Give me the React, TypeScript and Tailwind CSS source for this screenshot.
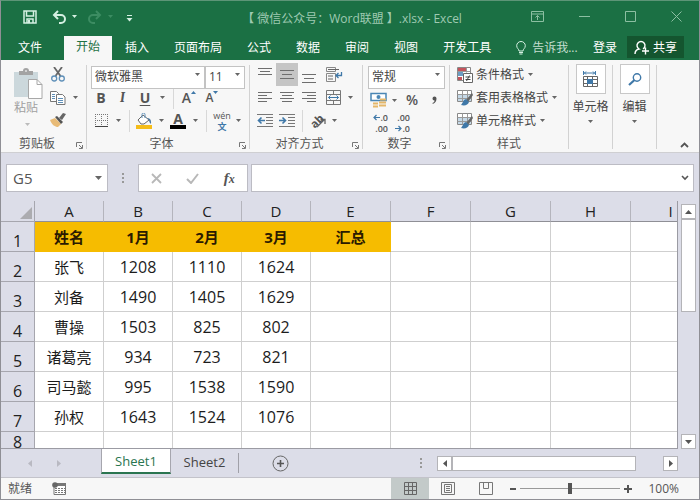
import type { ReactNode } from 'react';

const columns = [
  { name: 'A', width: 'w-[69px]' },
  { name: 'B', width: 'w-[69px]' },
  { name: 'C', width: 'w-[69px]' },
  { name: 'D', width: 'w-[69px]' },
  { name: 'E', width: 'w-[80px]' },
  { name: 'F', width: 'w-[80px]' },
  { name: 'G', width: 'w-[80px]' },
  { name: 'H', width: 'w-[80px]' },
  { name: 'I', width: 'w-[80px]' },
];

const rows: string[][] = [
  ['姓名', '1月', '2月', '3月', '汇总'],
  ['张飞', '1208', '1110', '1624'],
  ['刘备', '1490', '1405', '1629'],
  ['曹操', '1503', '825', '802'],
  ['诸葛亮', '934', '723', '821'],
  ['司马懿', '995', '1538', '1590'],
  ['孙权', '1643', '1524', '1076'],
  [],
];

const menuTabs = ['插入', '页面布局', '公式', '数据', '审阅', '视图', '开发工具'];

function Svg({ w, h, children }: { w: number; h: number; children: ReactNode }) {
  return (
    <svg width={w} height={h} viewBox={`0 0 ${w} ${h}`} fill="none" className="shrink-0" aria-hidden="true">
      {children}
    </svg>
  );
}

function Caret({ color = '#666' }: { color?: string }) {
  return (
    <Svg w={5} h={3}>
      <path d="M0 0h5L2.5 3z" fill={color} />
    </Svg>
  );
}

function Tool({ label, width, className = '', children }: { label: string; width: string; className?: string; children: ReactNode }) {
  return (
    <button aria-label={label} className={`flex h-[23px] shrink-0 items-center justify-center ${width} ${className}`}>
      {children}
    </button>
  );
}

function Separator() {
  return (
    <span className="flex w-2 shrink-0 justify-center">
      <span className="h-[22px] w-px bg-[#d8d8d8]" />
    </span>
  );
}

function Group({ label, width, launcher = false, children }: { label?: string; width: string; launcher?: boolean; children: ReactNode }) {
  return (
    <section className={`flex shrink-0 flex-col ${width}`}>
      <div className="flex flex-1">
        <div className="flex min-w-0 flex-1 flex-col">
          <div className="h-[69px]">{children}</div>
          {label && (
            <div className="flex h-6 items-center">
              <h2 className="flex-1 text-center text-[12px] leading-4 text-[#555]">{label}</h2>
              {launcher && (
                <button aria-label={`${label}设置`} className="flex w-[13px] justify-center pt-[3px]">
                  <Svg w={7} h={7}>
                    <path d="M.5 5V.5H6M3 3l3 3M6.5 3v3.5H3" stroke="#777" />
                  </Svg>
                </button>
              )}
            </div>
          )}
        </div>
        <span className="my-[2px] h-[84px] w-px bg-[#d2d2d2]" />
      </div>
    </section>
  );
}

function Dropdown({ label, value, className }: { label: string; value: string; className: string }) {
  return (
    <div className={`relative ${className}`}>
      <select
        aria-label={label}
        className="h-[23px] w-full appearance-none border border-[#c3c3c3] bg-white pl-[3px] text-[12px] leading-4 text-[#444] outline-none"
      >
        <option>{value}</option>
      </select>
      <span className="pointer-events-none absolute top-[10px] right-[5px] flex">
        <Caret />
      </span>
    </div>
  );
}

function Lines({ rows: lines }: { rows: [number, number, number][] }) {
  return (
    <Svg w={16} h={15}>
      {lines.map(([x, y, w]) => (
        <path key={y} d={`M${x} ${y}.5h${w}`} stroke="#6e6e6e" />
      ))}
    </Svg>
  );
}

function TitleBar() {
  return (
    <header className="flex h-[35px] items-center pr-[17px] pl-[22px] text-[#9fcab2]">
      <button aria-label="保存" className="mt-[-4px]">
        <Svg w={14} h={14}>
          <path d="M1 1h12v12H1zM3.5 1v5h7V1M4 13V9h6v4" stroke="#d5f0e2" strokeWidth="1.5" />
          <path d="M5 10h2v3H5z" fill="#d5f0e2" />
        </Svg>
      </button>
      <button aria-label="撤消" className="mt-[-4px] ml-[15px] flex items-center gap-[5px]">
        <Svg w={15} h={14}>
          <path d="M2 5h7a4 4 0 0 1 0 8H7M6 1L2 5l4 4" stroke="#d5f0e2" strokeWidth="2" />
        </Svg>
        <Caret color="#d5f0e2" />
      </button>
      <button aria-label="恢复" className="mt-[-4px] ml-[10px] flex items-center gap-[6px]">
        <Svg w={15} h={14}>
          <path d="M13 5H6a4 4 0 0 0 0 8h2M9 1l4 4-4 4" stroke="#3c8c62" strokeWidth="2" />
        </Svg>
        <Caret color="#3c8c62" />
      </button>
      <button aria-label="自定义快速访问工具栏" className="ml-[13px]">
        <Svg w={7} h={7}>
          <path d="M1 .5h5" stroke="#d5f0e2" />
          <path d="M.5 3h6l-3 3.5z" fill="#d5f0e2" />
        </Svg>
      </button>
      <h1 className="flex-1 pl-[40px] text-center text-[12px] leading-4 whitespace-nowrap">【 微信公众号：Word联盟 】.xlsx - Excel</h1>
      <div className="mt-[-4px] flex items-center gap-[35px]">
        <button aria-label="功能区显示选项">
          <Svg w={13} h={11}>
            <path d="M.5.5h12v10H.5zM.5 3h12M6.5 9V4.500M4.500 6.500l2-2 2 2" stroke="#8cbfa2" />
          </Svg>
        </button>
        <button aria-label="最小化">
          <Svg w={11} h={11}>
            <path d="M0 5.500h11" stroke="#8cbfa2" />
          </Svg>
        </button>
        <button aria-label="最大化">
          <Svg w={11} h={11}>
            <path d="M.5.5h10v10H.5z" stroke="#8cbfa2" />
          </Svg>
        </button>
        <button aria-label="关闭">
          <Svg w={11} h={11}>
            <path d="M.5.5l10 10M10.500.5l-10 10" stroke="#8cbfa2" />
          </Svg>
        </button>
      </div>
    </header>
  );
}

function MenuTabs() {
  return (
    <nav className="flex h-6 items-center gap-px pr-[15px] pl-[5px] text-[12px] leading-4 whitespace-nowrap text-white">
      <button className="mr-[9px] px-3">文件</button>
      <button className="h-full bg-[#f7f7f7] px-3 pb-[2px] text-[#1e7145]">开始</button>
      {menuTabs.map((tab) => (
        <button key={tab} className="px-3">
          {tab}
        </button>
      ))}
      <button className="ml-3 flex items-center gap-[6px] text-[#c4dfd0]">
        <Svg w={10} h={14}>
          <path d="M3 10C3 8 .7 7.500.7 4.700a4.300 4.200 0 0 1 8.600 0C9.300 7.500 7 8 7 10zM3 11.500h4M3.500 13h3" stroke="#d5f0e2" />
        </Svg>
        告诉我...
      </button>
      <span className="flex-1" />
      <button>登录</button>
      <button className="ml-[9px] flex h-[22px] items-center gap-[4px] self-start bg-[#14552f] px-[7px] pt-px">
        <Svg w={15} h={15}>
          <path d="M1 14c0-3 1.500-4.500 4-5a4 4 0 1 1 4 0M11.500 7.500v7M8 11h7" stroke="#fff" strokeWidth="1.4" />
        </Svg>
        共享
      </button>
    </nav>
  );
}

function ClipboardGroup() {
  return (
    <Group label="剪贴板" width="w-[86px]" launcher>
      <div className="flex h-full">
        <button className="ml-[13px] flex w-[30px] flex-col items-start justify-start gap-px pt-[5px] text-[12px] leading-4 text-[#a0a0a0]">
          <Svg w={29} h={31}>
            <path d="M0 4h24v25H0z" fill="#ccd8dc" />
            <path d="M5 7V3h4a3 3 0 0 1 6 0h4v4z" fill="#a3a3a3" />
            <path d="M11 3h2" stroke="#fff" />
            <path d="M14.500 11.500h8.500l5 5v14H14.500z" fill="#fff" stroke="#a8a8a8" />
            <path d="M23 11.500v5h5" stroke="#a8a8a8" />
          </Svg>
          粘贴
          <span className="ml-[11px] flex pt-[6px]">
            <Caret color="#bbb" />
          </span>
        </button>
        <div className="ml-[4px] flex flex-col">
          <Tool label="剪切" width="w-[20px]">
            <Svg w={14} h={15}>
              <path d="M3 0l6.500 9M11 0L4.500 9" stroke="#666" strokeWidth="1.8" />
              <circle cx="3.200" cy="11.500" r="2.500" stroke="#5e8fb8" strokeWidth="1.300" />
              <circle cx="10.800" cy="11.500" r="2.500" stroke="#5e8fb8" strokeWidth="1.300" />
            </Svg>
          </Tool>
          <div className="flex">
            <Tool label="复制" width="w-[20px]">
              <Svg w={16} h={14}>
                <path d="M.5.5h6l2 2v8h-8z" fill="#fff" stroke="#777" />
                <path d="M2 3.500h3M2 5.500h3M2 7.500h3" stroke="#5e8fb8" />
                <path d="M6.500 3.500h6l2.500 2.500v7.500H6.500z" fill="#fff" stroke="#777" />
                <path d="M8 7.500h5M8 9.500h5M8 11.500h5" stroke="#5e8fb8" />
              </Svg>
            </Tool>
            <Tool label="复制选项" width="w-[14px]">
              <Caret />
            </Tool>
          </div>
          <Tool label="格式刷" width="w-[20px]">
            <Svg w={16} h={15}>
              <path d="M0 7l5-2 6 6-3 3c-3 0-6-2-8-7z" fill="#e8bb77" />
              <path d="M5 4l2-1 6 6-2 2z" fill="#555" />
              <path d="M9 5l4-5 3 1-4 6z" fill="#666" />
            </Svg>
          </Tool>
        </div>
      </div>
    </Group>
  );
}

function FontGroup() {
  return (
    <Group label="字体" width="w-[163px]" launcher>
      <div className="pl-1">
        <div className="flex h-[23px]">
          <Dropdown label="字体" value="微软雅黑" className="w-[114px]" />
          <Dropdown label="字号" value="11" className="w-[40px]" />
        </div>
        <div className="flex items-center text-[14px] leading-5 text-[#555]">
          <Tool label="加粗" width="w-[20px]" className="font-bold">B</Tool>
          <Tool label="倾斜" width="w-[23px]" className="font-serif font-bold italic">I</Tool>
          <Tool label="下划线" width="w-[22px]" className="font-bold underline underline-offset-2">U</Tool>
          <Tool label="下划线选项" width="w-[13px]">
            <Caret />
          </Tool>
          <Separator />
          <Tool label="增大字号" width="w-[24px]" className="font-semibold">
            A
            <span className="self-start pt-[5px]">
              <Svg w={5} h={3}>
                <path d="M0 3h5L2.500 0z" fill="#3f78a8" />
              </Svg>
            </span>
          </Tool>
          <Tool label="减小字号" width="w-[22px]" className="text-[12px] font-semibold">
            A
            <span className="self-start pt-[5px]">
              <Caret color="#3f78a8" />
            </span>
          </Tool>
        </div>
        <div className="flex items-center text-[#555]">
          <Tool label="边框" width="w-[20px]">
            <Svg w={13} h={13}>
              <path d="M.5 0v12M6.500 0v12M12.500 0v12M0 .5h13M0 6.500h13" stroke="#777" strokeDasharray="1 1" />
              <path d="M0 12.500h13" stroke="#444" />
            </Svg>
          </Tool>
          <Tool label="边框选项" width="w-[14px]">
            <Caret />
          </Tool>
          <Separator />
          <Tool label="填充颜色" width="w-[22px]">
            <Svg w={16} h={16}>
              <path d="M2 7l5-5 6 5-5 4H5z" fill="#fff" stroke="#666" />
              <path d="M6 5V1.500a1.500 1.500 0 0 1 3 0V5" stroke="#5e8fb8" />
              <path d="M11 5c3 0 4.500 2 4 6-1-1-2-2-2-4z" fill="#4a7ba6" />
              <path d="M0 12h16v4H0z" fill="#f5bd1a" />
            </Svg>
          </Tool>
          <Tool label="填充颜色选项" width="w-[13px]">
            <Caret />
          </Tool>
          <Tool label="字体颜色" width="w-[20px]">
            <span className="flex w-4 flex-col items-center border-b-4 border-black text-[14px] leading-3 font-bold">A</span>
          </Tool>
          <Tool label="字体颜色选项" width="w-[14px]">
            <Caret />
          </Tool>
          <Separator />
          <Tool label="拼音指南" width="w-[24px]" className="flex-col text-[9px] leading-[11px]">
            <span>wén</span>
            <span className="font-bold text-[#3f78a8]">文</span>
          </Tool>
          <Tool label="拼音选项" width="w-[9px]">
            <Caret />
          </Tool>
        </div>
      </div>
    </Group>
  );
}

function AlignGroup() {
  return (
    <Group label="对齐方式" width="w-[113px]" launcher>
      <div className="pl-1">
        <div className="flex">
          <Tool label="顶端对齐" width="w-[22px]" className="pb-[3px]">
            <Lines rows={[[1, 2, 14], [3, 5, 10], [1, 8, 14]]} />
          </Tool>
          <Tool label="垂直居中" width="w-[22px]" className="bg-[#c5c5c5]">
            <Lines rows={[[1, 3, 14], [3, 7, 10], [1, 11, 14]]} />
          </Tool>
          <Tool label="底端对齐" width="w-[22px]" className="pt-[4px]">
            <Lines rows={[[1, 5, 14], [3, 9, 10], [1, 13, 14]]} />
          </Tool>
          <Tool label="自动换行" width="w-[28px]">
            <Svg w={17} h={15}>
              <path d="M.5.5h9v4h-9zM.5 6.500h9v8h-9z" stroke="#888" />
              <path d="M2 2.500h11M2 9h5M2 12h5" stroke="#666" />
              <path d="M15.500 5v3.500H10M12.500 6l-2.500 2.500 2.500 2.500" stroke="#3f78a8" strokeWidth="1.300" />
            </Svg>
          </Tool>
        </div>
        <div className="flex">
          <Tool label="左对齐" width="w-[22px]">
            <Lines rows={[[1, 2, 14], [1, 5, 9], [1, 8, 14], [1, 11, 9]]} />
          </Tool>
          <Tool label="居中" width="w-[22px]">
            <Lines rows={[[1, 2, 14], [3, 5, 10], [1, 8, 14], [3, 11, 10]]} />
          </Tool>
          <Tool label="右对齐" width="w-[22px]">
            <Lines rows={[[1, 2, 14], [6, 5, 9], [1, 8, 14], [6, 11, 9]]} />
          </Tool>
          <Tool label="合并后居中" width="w-[26px]">
            <Svg w={15} h={15}>
              <path d="M.5.5h14v14H.5zM.5 4.500h14M.5 10.500h14M7.500.5v4M7.500 10.500v4" stroke="#777" />
              <path d="M2.500 7.500h10M4.500 5.500l-2 2 2 2M10.500 5.500l2 2-2 2" stroke="#3f78a8" />
            </Svg>
          </Tool>
          <Tool label="合并选项" width="w-[9px]">
            <Caret />
          </Tool>
        </div>
        <div className="flex items-center">
          <Tool label="减少缩进量" width="w-[22px]">
            <Svg w={16} h={13}>
              <path d="M0 .5h16M9 3.500h7M9 6.500h7M9 9.500h7M0 12.500h16" stroke="#777" />
              <path d="M8 6.500H2M4.500 3.500l-3 3 3 3" stroke="#3f78a8" strokeWidth="1.600" />
            </Svg>
          </Tool>
          <Tool label="增加缩进量" width="w-[22px]">
            <Svg w={16} h={13}>
              <path d="M0 .5h16M9 3.500h7M9 6.500h7M9 9.500h7M0 12.500h16" stroke="#777" />
              <path d="M0 6.500h6M3.500 3.500l3 3-3 3" stroke="#3f78a8" strokeWidth="1.600" />
            </Svg>
          </Tool>
          <Separator />
          <Tool label="方向" width="w-[24px]" className="text-[11px] leading-3 text-[#555]">
            <span className="-rotate-45 font-bold">ab</span>
            <span className="ml-[-7px] pt-[4px]">
              <Svg w={10} h={10}>
                <path d="M1 9l7-7M4.500 1.500H9V6" stroke="#666" strokeWidth="1.300" />
              </Svg>
            </span>
          </Tool>
          <Tool label="方向选项" width="w-[8px]">
            <Caret />
          </Tool>
        </div>
      </div>
    </Group>
  );
}

function NumberGroup() {
  return (
    <Group label="数字" width="w-[87px]" launcher>
      <div className="pl-[5px]">
        <Dropdown label="数字格式" value="常规" className="w-[77px]" />
        <div className="flex text-[#555]">
          <Tool label="会计数字格式" width="w-[21px]">
            <Svg w={17} h={16}>
              <path d="M1 1.500h15v7H1z" fill="#fff" stroke="#4a86b5" strokeWidth="1.500" />
              <circle cx="8.500" cy="5" r="2" fill="#4a86b5" />
              <path d="M10 7.500h6M9 10.500h7M3 11.500h5M3 14.500h5M9 13.500h7" stroke="#e5b769" strokeWidth="2" />
            </Svg>
          </Tool>
          <Tool label="会计格式选项" width="w-[11px]">
            <Caret />
          </Tool>
          <Tool label="百分比样式" width="w-[24px]" className="pb-[2px] text-[14px] font-semibold">%</Tool>
          <Tool label="千位分隔样式" width="w-[20px]">
            <Svg w={5} h={8}>
              <path d="M.5 2.500a2 2 0 0 1 4 0C4.500 5 3.500 7 .8 8L.5 7C2 6.500 2.500 5.500 2.500 4.500 1.300 4.500.5 3.600.5 2.500z" fill="#555" />
            </Svg>
          </Tool>
        </div>
        <div className="flex text-[9px] leading-[11px] font-semibold text-[#555]">
          <Tool label="增加小数位数" width="w-[20px]" className="flex-col">
            <span className="flex items-center self-end">
              <Svg w={7} h={7}>
                <path d="M7 3.500H1M3.500 1L1 3.500 3.500 6" stroke="#3f78a8" strokeWidth="1.200" />
              </Svg>
              .0
            </span>
            <span className="self-end">.00</span>
          </Tool>
          <Tool label="减少小数位数" width="w-[22px]" className="flex-col">
            <span className="self-end">.00</span>
            <span className="flex items-center self-end">
              <Svg w={7} h={7}>
                <path d="M0 3.500h6M3.500 1L6 3.500 3.500 6" stroke="#3f78a8" strokeWidth="1.200" />
              </Svg>
              .0
            </span>
          </Tool>
        </div>
      </div>
    </Group>
  );
}

function TableFormatIcon() {
  return (
    <Svg w={16} h={16}>
      <path d="M.5.5h14v11H.5z" fill="#fff" stroke="#888" />
      <path d="M1 4h13v7H1z" fill="#c5d9e8" />
      <path d="M.5 4.500h14M.5 8.500h14M5.500.5v11M10.500.5v11" stroke="#999" />
      <path d="M15 3l-6 7 2 2 5-7z" fill="#666" />
      <path d="M9 9c-3 1-3 4-5 6 4 1 7 0 8-3z" fill="#3f78a8" />
    </Svg>
  );
}

function StylesGroup() {
  const items: [string, ReactNode][] = [
    [
      '条件格式',
      <Svg key="cond" w={16} h={16}>
        <path d="M.5.5h13v13H.5z" fill="#fff" stroke="#888" />
        <path d="M1 1h8v3H1z" fill="#c4545c" />
        <path d="M1 5h5v4H1z" fill="#6d9dc4" />
        <path d="M1 10h4v3H1z" fill="#c4545c" />
        <path d="M9.500.5v5M.5 4.500h13" stroke="#999" />
        <path d="M6.500 6.500h9v9h-9z" fill="#fff" stroke="#666" />
        <path d="M8.500 10h5M8.500 12.500h5M12.500 8.500l-3 5.500" stroke="#444" />
      </Svg>,
    ],
    ['套用表格格式', <TableFormatIcon key="table" />],
    ['单元格样式', <TableFormatIcon key="cell" />],
  ];
  return (
    <Group label="样式" width="w-[119px]">
      <div className="pl-[7px]">
        {items.map(([text, icon]) => (
          <button key={text} className="flex h-[23px] items-center text-[12px] leading-4 whitespace-nowrap text-[#444]">
            {icon}
            <span className="mr-1 ml-[3px]">{text}</span>
            <Caret />
          </button>
        ))}
      </div>
    </Group>
  );
}

function BigTool({ label, icon }: { label: string; icon: ReactNode }) {
  return (
    <Group width="w-[44px]">
      <button className="flex w-full flex-col items-center pt-px text-[12px] leading-4 text-[#444]">
        <span className="flex size-[30px] items-center justify-center border border-[#c8c8c8] bg-white">{icon}</span>
        <span className="py-[5px] whitespace-nowrap">{label}</span>
        <Caret />
      </button>
    </Group>
  );
}

function Ribbon() {
  return (
    <div className="flex h-[93px] border-b border-[#cfcfd2] bg-[#f7f7f7] pt-[3px]">
      <ClipboardGroup />
      <FontGroup />
      <AlignGroup />
      <NumberGroup />
      <StylesGroup />
      <BigTool
        label="单元格"
        icon={
          <Svg w={15} h={16}>
            <path d="M.5 0v4M12.500 0v4M1 2h11M3 .5L1.500 2 3 3.500M10 .5L11.500 2 10 3.500" stroke="#3f78a8" />
            <path d="M.5 5.500h14v10H.5zM.5 8.500h14M.5 12.500h14M4.500 5.500v10M9.500 5.500v10" stroke="#666" />
            <path d="M4 8h6v5H4z" fill="#3f78a8" />
          </Svg>
        }
      />
      <BigTool
        label="编辑"
        icon={
          <Svg w={14} h={13}>
            <circle cx="9" cy="4.500" r="3.700" stroke="#3f78a8" strokeWidth="1.400" />
            <path d="M6.500 7L1 12" stroke="#3f78a8" strokeWidth="2.200" />
          </Svg>
        }
      />
      <button aria-label="折叠功能区" className="mr-[10px] mb-[4px] ml-auto self-end">
        <Svg w={9} h={6}>
          <path d="M1 5l3.500-3.500L8 5" stroke="#555" strokeWidth="1.800" />
        </Svg>
      </button>
    </div>
  );
}

function FormulaBar() {
  return (
    <div className="flex h-12 items-start pt-[11px] pr-[5px] pl-[5px]">
      <div className="relative w-[102px]">
        <input
          aria-label="名称框"
          defaultValue="G5"
          className="h-7 w-full border border-[#bcbcc4] bg-white pl-[6px] text-[15px] leading-5 text-[#555] outline-none"
        />
        <button aria-label="名称列表" className="absolute top-[12px] right-[6px] flex">
          <Svg w={7} h={4}>
            <path d="M0 0h7L3.500 4z" fill="#666" />
          </Svg>
        </button>
      </div>
      <span className="flex h-7 w-[30px] items-center justify-center">
        <Svg w={2} h={12}>
          <path d="M1 1v11" stroke="#999" strokeWidth="2" strokeDasharray="2 2" />
        </Svg>
      </span>
      <div className="flex h-7 w-[110px] items-center justify-around border border-[#bcbcc4] bg-white">
        <button aria-label="取消">
          <Svg w={11} h={11}>
            <path d="M1 1l9 9M10 1l-9 9" stroke="#b8b8b8" strokeWidth="1.800" />
          </Svg>
        </button>
        <button aria-label="输入">
          <Svg w={13} h={11}>
            <path d="M1 6l4 4 7-9" stroke="#b8b8b8" strokeWidth="2" />
          </Svg>
        </button>
        <button aria-label="插入函数" className="font-['Liberation_Serif',serif] text-[15px] leading-4 font-bold text-[#555] italic">
          f<span className="text-[12px]">x</span>
        </button>
      </div>
      <div className="relative ml-[3px] flex-1">
        <input aria-label="编辑栏" className="h-7 w-full border border-[#bcbcc4] bg-white px-2 text-[15px] outline-none" />
        <button aria-label="展开编辑栏" className="absolute top-[11px] right-[5px] flex">
          <Svg w={8} h={6}>
            <path d="M1 1l3 3 3-3" stroke="#555" strokeWidth="1.600" />
          </Svg>
        </button>
      </div>
    </div>
  );
}

function Sheet() {
  return (
    <div className="min-w-0 flex-1 overflow-hidden border-r border-b border-[#9b9ba3]">
      <table className="w-[710px] table-fixed border-separate border-spacing-0">
        <colgroup>
          <col className="w-[34px]" />
          {columns.map((column) => (
            <col key={column.name} className={column.width} />
          ))}
        </colgroup>
        <thead>
          <tr className="h-[21px] bg-[#dcdde8] text-[15px] leading-5 text-[#222]">
            <th className="border-r border-b border-[#a6a6ae] p-0">
              <span className="flex justify-end pt-[3px] pr-[2px]">
                <Svg w={12} h={12}>
                  <path d="M12 0v12H0z" fill="#acacb0" />
                </Svg>
              </span>
            </th>
            {columns.map((column) => (
              <th key={column.name} scope="col" className="border-r border-b border-r-[#b4b4bc] border-b-[#8f8f96] p-0 font-normal">
                {column.name}
              </th>
            ))}
          </tr>
        </thead>
        <tbody>
          {rows.map((row, index) => (
            <tr key={index} className="h-[30px]">
              <th
                scope="row"
                className={`border-r border-b border-[#a6a6ae] bg-[#dcdde8] p-0 text-[16px] leading-5 font-normal text-[#222] ${index === 7 ? 'align-top' : 'align-bottom'}`}
              >
                {index + 1}
              </th>
              {columns.map((column, col) => {
                const filled = index === 0 && col < 5;
                return (
                  <td
                    key={column.name}
                    className={`border-r border-b p-0 text-center leading-5 ${
                      filled
                        ? 'border-[#f6bc00] bg-[#f6bc00] text-[15px] font-bold text-[#2b1a00]'
                        : 'border-[#cfcfcf] bg-white text-[#1c1c1c]'
                    } ${!filled && col === 0 ? 'text-[15px]' : ''} ${!filled && col > 0 ? 'text-[16px]' : ''}`}
                  >
                    {row[col]}
                  </td>
                );
              })}
            </tr>
          ))}
        </tbody>
      </table>
    </div>
  );
}

const scrollButton = 'flex size-[15px] shrink-0 items-center justify-center border border-[#b4b4b8] bg-white';

function VerticalScroll() {
  return (
    <div className="flex w-[21px] flex-col items-center pt-[3px]">
      <button aria-label="向上滚动" className={scrollButton}>
        <Svg w={7} h={4}>
          <path d="M0 4h7L3.500 0z" fill="#555" />
        </Svg>
      </button>
      <div className="h-[93px] w-[15px] border border-[#b4b4b8] bg-white" />
      <span className="flex-1" />
      <button aria-label="向下滚动" className={scrollButton}>
        <Svg w={7} h={4}>
          <path d="M0 0h7L3.500 4z" fill="#555" />
        </Svg>
      </button>
    </div>
  );
}

function SheetTabs() {
  return (
    <div className="flex h-7 text-[13px] leading-4">
      <div className="flex w-[100px] items-center gap-[24px] pl-[27px]">
        <button aria-label="上一张工作表">
          <Svg w={5} h={7}>
            <path d="M4 0v7L0 3.500z" fill="#b9b9c2" />
          </Svg>
        </button>
        <button aria-label="下一张工作表">
          <Svg w={5} h={7}>
            <path d="M0 0v7l4-3.500z" fill="#b9b9c2" />
          </Svg>
        </button>
      </div>
      <button className="h-[25px] w-[70px] border-x border-b-2 border-x-[#a6a6ae] border-b-[#2a7550] bg-white text-[#2a7550]">Sheet1</button>
      <button className="h-[25px] w-[67px] text-[#444]">Sheet2</button>
      <span className="mt-1 h-5 w-px bg-[#a0a0a8]" />
      <button aria-label="新工作表" className="ml-[33px]">
        <Svg w={17} h={17}>
          <circle cx="8.500" cy="8.500" r="7.500" stroke="#666" />
          <path d="M8.500 5v7M5 8.500h7" stroke="#555" strokeWidth="1.600" />
        </Svg>
      </button>
      <span className="flex-1" />
      <span className="flex w-[32px] items-center justify-center">
        <Svg w={2} h={12}>
          <path d="M1 1v11" stroke="#999" strokeWidth="2" strokeDasharray="2 2" />
        </Svg>
      </span>
      <div className="mr-[21px] flex w-[241px] items-center">
        <button aria-label="向左滚动" className={scrollButton}>
          <Svg w={4} h={7}>
            <path d="M4 0v7L0 3.500z" fill="#555" />
          </Svg>
        </button>
        <div className="h-[15px] w-[184px] border border-[#b4b4b8] bg-white" />
        <span className="flex-1" />
        <button aria-label="向右滚动" className={scrollButton}>
          <Svg w={4} h={7}>
            <path d="M0 0v7l4-3.500z" fill="#555" />
          </Svg>
        </button>
      </div>
    </div>
  );
}

function StatusBar() {
  return (
    <footer className="flex h-[22px] items-center border-t border-[#c3c3ca] bg-[#f7f7f7] pl-[7px] text-[12px] leading-4 text-[#555]">
      <span>就绪</span>
      <button aria-label="录制宏" className="ml-[20px]">
        <Svg w={14} h={13}>
          <path d="M2 3h11.500v9.500H2z" fill="#fff" stroke="#777" />
          <path d="M5 1h9v3H5z" fill="#777" />
          <circle cx="3" cy="3" r="2.800" fill="#666" />
          <path d="M3 6.500h10M3 8.500h10M3 10.500h10" stroke="#777" strokeDasharray="2 1" />
        </Svg>
      </button>
      <span className="flex-1" />
      <button aria-label="普通视图" className="flex h-full w-[38px] items-center justify-center bg-[#c3cac9]">
        <Svg w={13} h={13}>
          <path d="M.5.5h12v12H.5zM.5 4.500h12M.5 8.500h12M4.500.5v12M8.500.5v12" stroke="#666" />
        </Svg>
      </button>
      <button aria-label="页面布局视图" className="flex w-[38px] items-center justify-center">
        <Svg w={14} h={13}>
          <path d="M.5.5h13v12H.5zM3.500 2.500h7v8h-7zM5 4.500h4M5 6.500h4M5 8.500h4" stroke="#777" />
        </Svg>
      </button>
      <button aria-label="分页预览" className="flex w-[38px] items-center justify-center">
        <Svg w={14} h={13}>
          <path d="M.5.5h13v12H.5zM4.500.5v6h5v-6" stroke="#777" />
        </Svg>
      </button>
      <button aria-label="缩小" className="ml-[5px]">
        <Svg w={6} h={8}>
          <path d="M0 4h6" stroke="#555" strokeWidth="2" />
        </Svg>
      </button>
      <input
        type="range"
        aria-label="显示比例"
        min={0}
        max={200}
        defaultValue={100}
        className="ml-[4px] h-3 w-[100px] appearance-none bg-transparent [&::-webkit-slider-runnable-track]:h-px [&::-webkit-slider-runnable-track]:bg-[#999] [&::-webkit-slider-thumb]:mt-[-5px] [&::-webkit-slider-thumb]:h-[11px] [&::-webkit-slider-thumb]:w-[4px] [&::-webkit-slider-thumb]:appearance-none [&::-webkit-slider-thumb]:bg-[#555]"
      />
      <button aria-label="放大" className="ml-[4px]">
        <Svg w={8} h={8}>
          <path d="M0 4h8M4 0v8" stroke="#555" strokeWidth="2" />
        </Svg>
      </button>
      <button className="w-[67px] pr-[20px] text-right">100%</button>
    </footer>
  );
}

export default function App() {
  return (
    <main className="flex h-screen min-h-[400px] flex-col border border-t-[#5d9577] border-r-[#8f8f95] border-b-[#8f8f95] border-l-[#8f8f95] bg-[#dcdde8] font-['Open_Sans','Noto_Sans_CJK_SC',sans-serif]">
      <div className="bg-[#1b7044]">
        <TitleBar />
        <MenuTabs />
      </div>
      <Ribbon />
      <FormulaBar />
      <div className="flex min-h-0 flex-1">
        <Sheet />
        <VerticalScroll />
      </div>
      <SheetTabs />
      <StatusBar />
    </main>
  );
}
